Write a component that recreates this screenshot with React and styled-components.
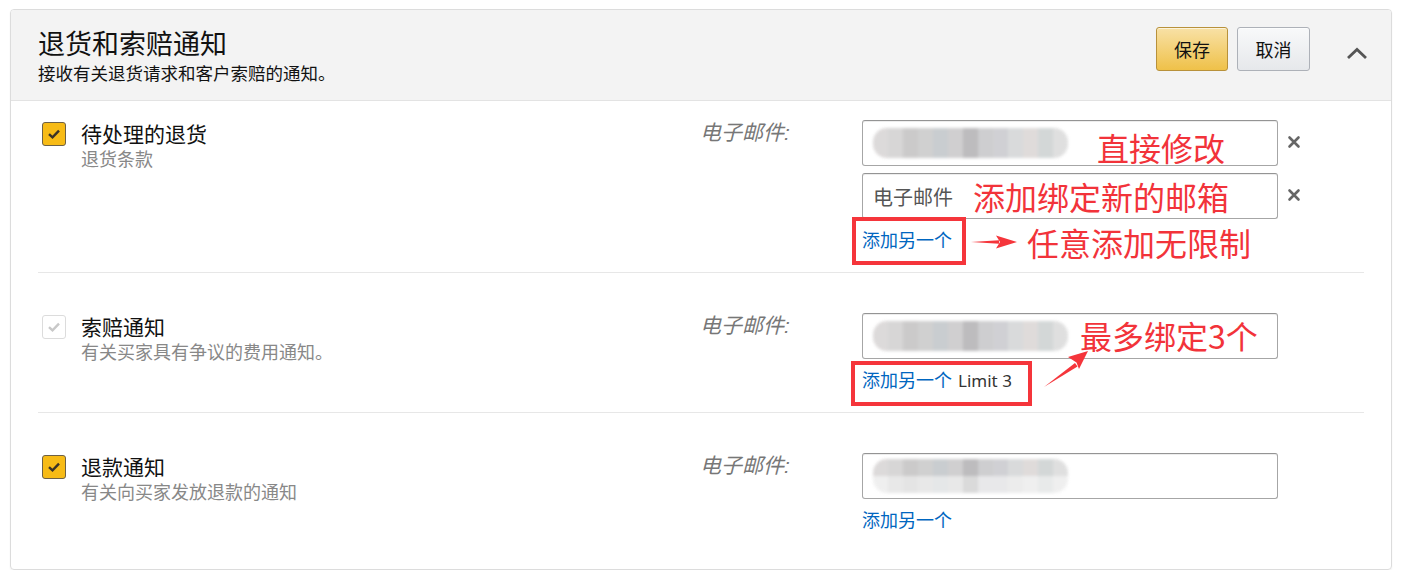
import React from "react";
import styled, { createGlobalStyle } from "styled-components";

const GlobalStyle = createGlobalStyle`
  body {
    margin: 0;
    background: #fff;
    font-family: "Liberation Sans", "Noto Sans CJK SC", sans-serif;
    color: #111;
  }
`;

const Card = styled.div`
  position: relative;
  box-sizing: border-box;
  width: 1382px;
  margin: 9px 0 0 10px;
  border: 1px solid #dcdcdc;
  border-radius: 4px;
  box-shadow: 0 1px 2px rgba(0, 0, 0, 0.06);
  overflow: hidden;
`;

const Header = styled.div`
  box-sizing: border-box;
  height: 91px;
  display: flex;
  align-items: flex-start;
  padding: 19px 19px 0 27px;
  background: #f3f3f3;
  border-bottom: 1px solid #e3e3e3;
`;

const HeaderText = styled.div`
  flex: 1;
`;

const Title = styled.div`
  font-size: 27px;
  line-height: 33px;
  color: #111;
`;

const Subtitle = styled.div`
  font-size: 17.5px;
  line-height: 25px;
  color: #111;
`;

const Actions = styled.div`
  display: flex;
  align-items: flex-start;
  gap: 9px;
  margin-top: -2px;
`;

const Button = styled.button`
  box-sizing: border-box;
  height: 44px;
  width: ${(p) => p.$w}px;
  border-radius: 3px;
  font-family: inherit;
  font-size: 18px;
  color: #111;
  cursor: pointer;
  border: 1px solid ${(p) => (p.$primary ? "#b8913a" : "#adb1b8")};
  background: ${(p) =>
    p.$primary
      ? "linear-gradient(to bottom, #f8e1a6, #efc149)"
      : "linear-gradient(to bottom, #f8f9fa, #e6e8eb)"};
  box-shadow: inset 0 1px 0 rgba(255, 255, 255, 0.6);
`;

const Collapse = styled.div`
  width: 30px;
  height: 30px;
  margin: 11px 0 0 23px;
  display: flex;
  align-items: center;
  justify-content: center;
`;

const Body = styled.div`
  padding: 0 27px;
`;

const Row = styled.div`
  display: grid;
  grid-template-columns: 662px 162px 416px 1fr;
  align-items: start;
  padding: ${(p) => p.$top}px 0 ${(p) => p.$bottom}px;
  border-bottom: ${(p) => (p.$last ? "none" : "1px solid #e7e7e7")};
`;

const Option = styled.div`
  display: flex;
  gap: 15px;
  padding-left: 4px;
  margin-top: 2px;
`;

const Box = styled.div`
  box-sizing: border-box;
  width: 24px;
  height: 24px;
  flex: none;
  border-radius: 3px;
  display: flex;
  align-items: center;
  justify-content: center;
  border: 1px solid ${(p) => (p.$disabled ? "#dcdcdc" : "#6d6147")};
  background: ${(p) => (p.$disabled ? "#fff" : "#f7bb16")};
`;

const OptionText = styled.div``;

const Label = styled.div`
  font-size: 21px;
  line-height: 26px;
  color: #111;
`;

const Hint = styled.div`
  font-size: 18px;
  line-height: 25px;
  color: #888;
`;

const FieldLabel = styled.div`
  font-size: 21px;
  line-height: 25px;
  font-style: italic;
  color: #777;
`;

const Fields = styled.div`
  display: flex;
  flex-direction: column;
  gap: 7px;
`;

const InputLine = styled.div`
  position: relative;
  display: flex;
  align-items: center;
`;

const Input = styled.div`
  box-sizing: border-box;
  width: 416px;
  height: 46px;
  border: 1px solid #a6a6a6;
  border-top-color: #949494;
  border-radius: 3px;
  box-shadow: inset 0 1px 0 rgba(0, 0, 0, 0.07);
  background: #fff;
  display: flex;
  align-items: center;
  padding-left: 10px;
  font-size: 20px;
  color: #555;
`;

const Remove = styled.div`
  position: absolute;
  left: 425px;
  top: 15px;
  width: 14px;
  height: 14px;
`;

const Blur = styled.div`
  display: grid;
  grid-template-columns: repeat(13, 15px);
  grid-auto-rows: ${(p) => p.$rowH}px;
  border-radius: 14px;
  overflow: hidden;
  filter: blur(1.4px);
  opacity: 0.9;
`;

const Cell = styled.div`
  background: ${(p) => p.$c};
`;

const LinkLine = styled.div`
  margin-top: 11px;
  font-size: 18px;
  line-height: 22px;
  color: #333;
  display: flex;
  gap: 6px;
`;

const Limit = styled.span`
  font-family: "Noto Sans", sans-serif;
  font-size: 17px;
`;

const Link = styled.a`
  color: #0066c0;
  text-decoration: none;
`;

const Note = styled.div`
  position: absolute;
  left: ${(p) => p.$x}px;
  top: ${(p) => p.$y}px;
  font-family: "Noto Sans CJK SC", sans-serif;
  font-size: 32px;
  line-height: 36px;
  color: #f2333a;
  white-space: nowrap;
`;

const Frame = styled.div`
  position: absolute;
  box-sizing: border-box;
  left: ${(p) => p.$x}px;
  top: ${(p) => p.$y}px;
  width: ${(p) => p.$w}px;
  height: ${(p) => p.$h}px;
  border: 4px solid #f5353b;
`;

const Arrow = styled.svg`
  position: absolute;
  left: ${(p) => p.$x}px;
  top: ${(p) => p.$y}px;
`;

const blurTop = ["#d9d6d6", "#d3d2d2", "#c6c5c5", "#cbcbcb", "#c4c8cb", "#cbcacb", "#b6b5b7", "#c9c9cb", "#ccccd0", "#d5d7d8", "#dcd8d7", "#cfd3d3", "#dcdcdc"];
const blurBottom = ["#eeeeee", "#e6e6e6", "#e2e2e2", "#e6e6e6", "#e3e5e6", "#e6e6e6", "#d6d6d6", "#e6e6e8", "#e6e6e8", "#eaeaea", "#eeeeee", "#e6e8e8", "#eeeeee"];

function Blurred({ tall }) {
  const rows = tall ? [blurTop, blurBottom] : [blurTop];
  return (
    <Blur $rowH={tall ? 17 : 30}>
      {rows.map((r, i) => r.map((c, j) => <Cell key={i + "-" + j} $c={c} />))}
    </Blur>
  );
}

function Check({ disabled }) {
  return (
    <Box $disabled={disabled}>
      <svg width="14" height="12" viewBox="0 0 14 12">
        <path d="M2 6.2 L5.5 9.4 L12 2.6" fill="none" stroke={disabled ? "#c8c8c8" : "#3a3227"} strokeWidth="2.4" />
      </svg>
    </Box>
  );
}

function Close() {
  return (
    <Remove>
      <svg width="14" height="14" viewBox="0 0 14 14">
        <path d="M2.5 2.5 L11.5 11.5 M11.5 2.5 L2.5 11.5" stroke="#666" strokeWidth="2.6" strokeLinecap="round" />
      </svg>
    </Remove>
  );
}

const rows = [
  { label: "待处理的退货", hint: "退货条款", top: 19, bottom: 20, fields: ["blur", "empty"], removable: true },
  { label: "索赔通知", hint: "有关买家具有争议的费用通知。", top: 40, bottom: 20, fields: ["blur"], disabled: true, limit: true },
  { label: "退款通知", hint: "有关向买家发放退款的通知", top: 40, bottom: 37, fields: ["tall"], last: true },
];

export default function App() {
  return (
    <>
      <GlobalStyle />
      <Card>
        <Header>
          <HeaderText>
            <Title>退货和索赔通知</Title>
            <Subtitle>接收有关退货请求和客户索赔的通知。</Subtitle>
          </HeaderText>
          <Actions>
            <Button $primary $w={72}>保存</Button>
            <Button $w={73}>取消</Button>
            <Collapse>
              <svg width="22" height="14" viewBox="0 0 22 14">
                <path d="M2 12 L11 3.5 L20 12" fill="none" stroke="#555" strokeWidth="2.8" />
              </svg>
            </Collapse>
          </Actions>
        </Header>
        <Body>
          {rows.map((r) => (
            <Row key={r.label} $top={r.top} $bottom={r.bottom} $last={r.last}>
              <Option>
                <Check disabled={r.disabled} />
                <OptionText>
                  <Label>{r.label}</Label>
                  <Hint>{r.hint}</Hint>
                </OptionText>
              </Option>
              <FieldLabel>电子邮件:</FieldLabel>
              <div>
                <Fields>
                  {r.fields.map((f, i) => (
                    <InputLine key={i}>
                      <Input>
                        {f === "empty" ? "电子邮件" : <Blurred tall={f === "tall"} />}
                      </Input>
                      {r.removable && <Close />}
                    </InputLine>
                  ))}
                </Fields>
                <LinkLine>
                  <Link href="#">添加另一个</Link>
                  {r.limit && <Limit>Limit 3</Limit>}
                </LinkLine>
              </div>
              <div />
            </Row>
          ))}
        </Body>

        <Note $x={1086} $y={119}>直接修改</Note>
        <Note $x={962} $y={168}>添加绑定新的邮箱</Note>
        <Note $x={1016} $y={214}>任意添加无限制</Note>
        <Note $x={1069} $y={307}>最多绑定3个</Note>
        <Frame $x={841} $y={207} $w={114} $h={48} />
        <Frame $x={840} $y={351} $w={181} $h={45} />
        <Arrow $x={958} $y={224} width="50" height="16" viewBox="0 0 50 16">
          <path d="M2 8 L30 6.3 L30 9.7 Z" fill="#f5353b" />
          <path d="M27 1.5 L48 8 L27 14.5 L31 8 Z" fill="#f5353b" />
        </Arrow>
        <Arrow $x={1030} $y={338} width="52" height="42" viewBox="0 0 52 42">
          <path d="M3 39 L34 15 L36.5 18.5 Z" fill="#f5353b" />
          <path d="M27 9 L47 3 L38 21 L35.5 14.5 Z" fill="#f5353b" />
        </Arrow>
      </Card>
    </>
  );
}
